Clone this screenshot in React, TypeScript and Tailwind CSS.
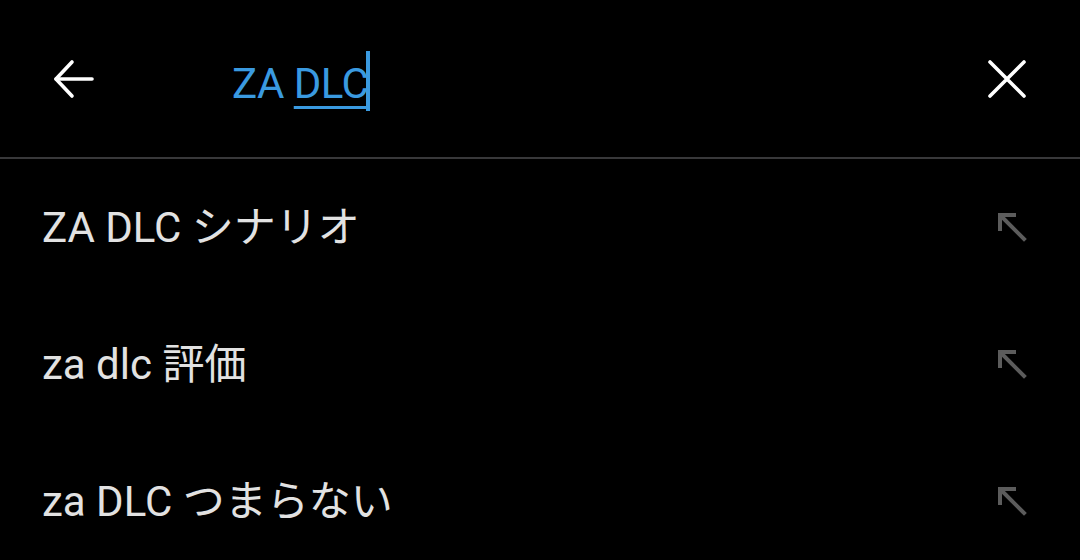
const suggestions = ['ZA DLC シナリオ', 'za dlc 評価', 'za DLC つまらない']

function BackIcon() {
  return (
    <svg width="44" height="44" viewBox="0 0 44 44" fill="none" stroke="white" strokeWidth="3.6" strokeLinecap="round" strokeLinejoin="round">
      <path d="M40 22H4" />
      <path d="M20 5L4 22l16 17" />
    </svg>
  )
}

function CloseIcon() {
  return (
    <svg width="40" height="40" viewBox="0 0 40 40" fill="none" stroke="white" strokeWidth="3.6" strokeLinecap="round">
      <path d="M3 3l34 34M37 3L3 37" />
    </svg>
  )
}

function FillIcon() {
  return (
    <svg width="34" height="34" viewBox="0 0 34 34" fill="none" stroke="#5c5c5c" strokeWidth="4" strokeLinecap="square">
      <path d="M4 18V4h14" />
      <path d="M5 5l23 23" />
    </svg>
  )
}

export default function App() {
  return (
    <div className="w-[1080px] h-[560px] bg-black overflow-hidden" style={{ fontFamily: 'Roboto, "Noto Sans CJK JP", sans-serif' }}>
      <div className="h-[157px] flex items-center">
        <div className="w-[232px] pl-[52px] flex items-center">
          <BackIcon />
        </div>
        <div className="flex-1 flex items-center">
          <span className="mt-[10px] text-[42px] text-[#3a9ae0] leading-none tracking-[-0.5px]">
            ZA <span className="underline decoration-[3px] underline-offset-[8px]">DLC</span>
          </span>
          <span className="mt-[4px] w-[4px] h-[60px] bg-[#3a9ae0] ml-[-2px]" />
        </div>
        <div className="pr-[53px]">
          <CloseIcon />
        </div>
      </div>
      <div className="h-[2px] bg-[#38383a]" />
      {suggestions.map((s) => (
        <div key={s} className="h-[137px] flex items-center justify-between pl-[42px] pr-[50px]">
          <span className="text-[42px] text-[#e2e2e2] leading-none">{s}</span>
          <FillIcon />
        </div>
      ))}
    </div>
  )
}
